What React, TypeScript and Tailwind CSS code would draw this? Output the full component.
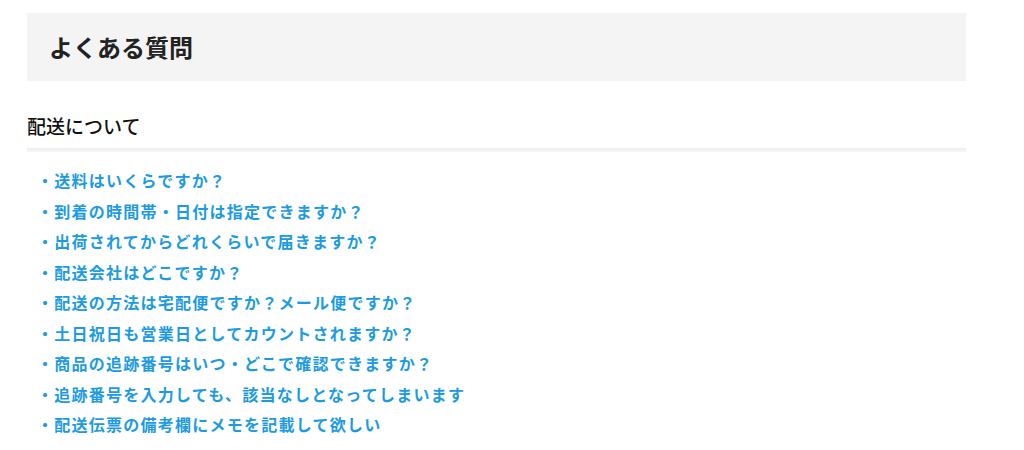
import React from "react";

const questions = [
  "送料はいくらですか？",
  "到着の時間帯・日付は指定できますか？",
  "出荷されてからどれくらいで届きますか？",
  "配送会社はどこですか？",
  "配送の方法は宅配便ですか？メール便ですか？",
  "土日祝日も営業日としてカウントされますか？",
  "商品の追跡番号はいつ・どこで確認できますか？",
  "追跡番号を入力しても、該当なしとなってしまいます",
  "配送伝票の備考欄にメモを記載して欲しい",
];

export default function App() {
  return (
    <div
      className="min-h-[450px] bg-white pt-[13px] pl-[27px]"
      style={{ fontFamily: '"Noto Sans CJK JP", "Noto Sans", sans-serif' }}
    >
      <div className="w-[939px]">
        <div className="h-[68px] bg-[#f4f4f4] flex items-center pl-[22px]">
          <h1 className="text-[24px] font-bold text-[#222] leading-none">よくある質問</h1>
        </div>

        <h2 className="mt-[35px] text-[19px] font-medium text-[#111] leading-[20px]">配送について</h2>
        <div className="mt-[12px] h-[4px] bg-gradient-to-b from-[#eeeeee] to-[#f8f8f8]" />

        <ul className="mt-[13px] pl-[10px]">
          {questions.map((q, i) => (
            <li key={i} className="leading-[30.5px] text-[16px] font-bold text-[#1d9be2] tracking-[1.25px]">
              <a href="#">・{q}</a>
            </li>
          ))}
        </ul>
      </div>
    </div>
  );
}
